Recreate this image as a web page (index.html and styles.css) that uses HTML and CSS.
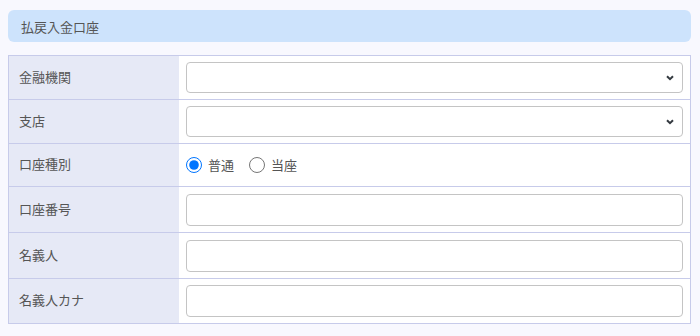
FILE: index.html
```html
<!DOCTYPE html>
<html lang="ja">
<head>
<meta charset="utf-8">
<link rel="stylesheet" href="styles.css">
</head>
<body>
<div class="page">
  <div class="section-title">払戻入金口座</div>
  <div class="form">
    <div class="row row-select">
      <div class="label">金融機関</div>
      <div class="field">
        <div class="select">
          <svg class="chev" viewBox="0 0 8 6" width="8" height="6"><path d="M1 1.2 4 4.2 7 1.2" fill="none" stroke="#343a40" stroke-width="2"/></svg>
        </div>
      </div>
    </div>
    <div class="row row-select">
      <div class="label">支店</div>
      <div class="field">
        <div class="select">
          <svg class="chev" viewBox="0 0 8 6" width="8" height="6"><path d="M1 1.2 4 4.2 7 1.2" fill="none" stroke="#343a40" stroke-width="2"/></svg>
        </div>
      </div>
    </div>
    <div class="row row-radio">
      <div class="label">口座種別</div>
      <div class="field radios">
        <label class="radio"><input type="radio" name="kind" checked><span>普通</span></label>
        <label class="radio"><input type="radio" name="kind"><span>当座</span></label>
      </div>
    </div>
    <div class="row row-text">
      <div class="label">口座番号</div>
      <div class="field"><input class="text" type="text"></div>
    </div>
    <div class="row row-text">
      <div class="label">名義人</div>
      <div class="field"><input class="text" type="text"></div>
    </div>
    <div class="row row-last">
      <div class="label">名義人カナ</div>
      <div class="field"><input class="text" type="text"></div>
    </div>
  </div>
</div>
</body>
</html>
```
FILE: styles.css
```css
html, body {
  margin: 0;
  padding: 0;
  background: #f8f8fe;
}
body {
  font-family: "Noto Sans CJK JP", "Noto Sans", sans-serif;
  font-size: 13px;
  color: #555;
}
.page {
  padding: 10px 9px 0 8px;
}
.section-title {
  height: 32px;
  background: #cde3fc;
  border-radius: 6px;
  display: flex;
  align-items: center;
  padding-left: 13px;
}
.form {
  margin-top: 13px;
  border: 1px solid #c7cbea;
  background: #fff;
}
.row {
  display: flex;
  border-top: 1px solid #c7cbea;
}
.row:first-child {
  border-top: none;
}
.row-select { height: 43px; }
.row-radio { height: 42px; }
.row-text { height: 45px; }
.row-last { height: 44px; }
.label {
  width: 170px;
  flex: none;
  background: #e6e9f6;
  display: flex;
  align-items: center;
  padding: 0 0 3px 10px;
  box-sizing: border-box;
}
.field {
  flex: 1;
  display: flex;
  align-items: center;
  padding: 0 7px;
}
.row-text .field { padding-top: 1px; }
.select {
  width: 100%;
  height: 31px;
  border: 1px solid #c4c4c4;
  border-radius: 4px;
  box-sizing: border-box;
  display: flex;
  align-items: center;
  justify-content: flex-end;
  padding-right: 8px;
  background: #fff;
}
.chev {
  display: block;
}
.text {
  width: 100%;
  height: 32px;
  border: 1px solid #c4c4c4;
  border-radius: 4px;
  box-sizing: border-box;
  margin: 0;
  background: #fff;
}
.radios {
  gap: 15px;
}
.radio {
  display: flex;
  align-items: center;
  gap: 6px;
}
.radio span {
  padding-bottom: 2px;
}
.radio input {
  margin: 0;
  width: 16px;
  height: 16px;
}
```
